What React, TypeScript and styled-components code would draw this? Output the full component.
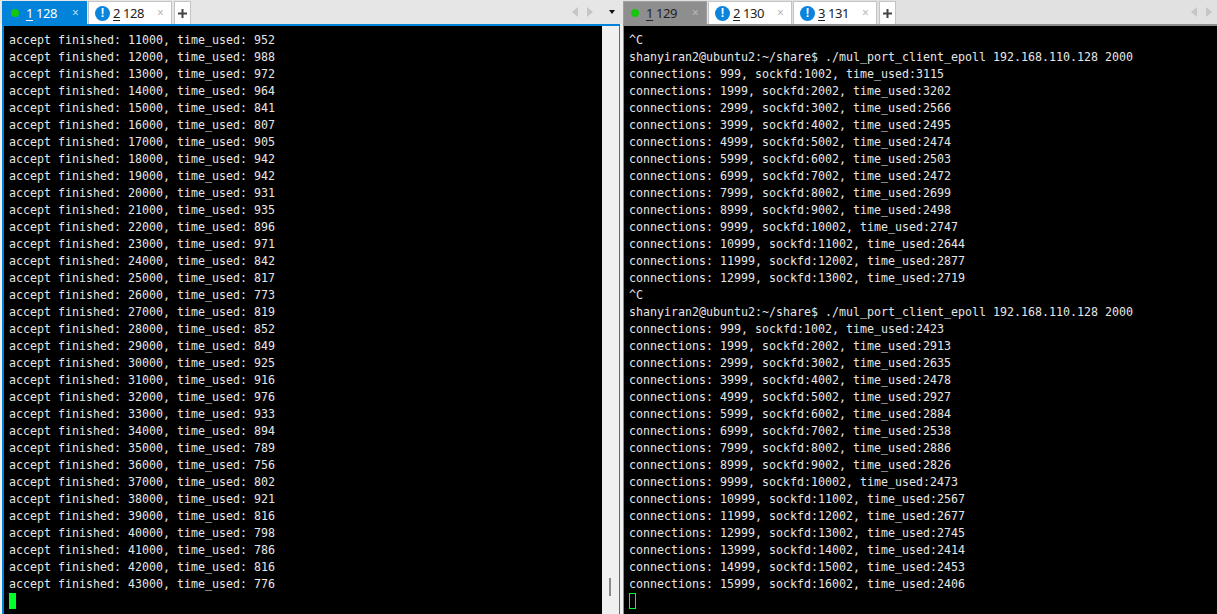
import React from "react";
import styled, { createGlobalStyle } from "styled-components";

const Global = createGlobalStyle`
  html, body { margin: 0; padding: 0; width: 1217px; height: 614px; overflow: hidden; background: #f0f0f0; }
`;

const Page = styled.div`
  display: flex;
  width: 1217px;
  height: 614px;
  background: #f0f0f0;
  font-family: "Noto Sans", "Liberation Sans", sans-serif;
`;

const Pane = styled.section<{ $w: number }>`
  width: ${(p) => p.$w}px;
  flex: none;
  display: flex;
  flex-direction: column;
  height: 614px;
`;

const TabBar = styled.div`
  height: 24px;
  flex: none;
  display: flex;
  align-items: flex-end;
  gap: 1px;
  padding-left: 2px;
  background: #e6e6e6;
`;

const RightBar = styled(TabBar)`
  background: #e1e1e1;
  padding-left: 0;
`;

const Tab = styled.div<{ $state: "active" | "dim" | "idle" }>`
  width: ${(p) => (p.$state === "active" ? 85 : 84)}px;
  height: 23px;
  box-sizing: border-box;
  display: flex;
  align-items: center;
  padding-left: ${(p) => (p.$state === "idle" ? 6 : p.$state === "active" ? 8 : 7)}px;
  font-size: 13px;
  letter-spacing: -0.4px;
  background: ${(p) => (p.$state === "active" ? "#0083d8" : p.$state === "dim" ? "#8e8e8e" : "#fff")};
  color: ${(p) => (p.$state === "active" ? "#fff" : "#222")};
  border: 1px solid ${(p) => (p.$state === "active" ? "#0083d8" : p.$state === "dim" ? "#a0a0a0" : "#c4c4c4")};
  border-bottom: none;
  flex: none;
`;

const Dot = styled.span`
  width: 8px;
  height: 8px;
  border-radius: 50%;
  background: #16c60c;
  margin-right: 7px;
  flex: none;
`;

const Alert = styled.span`
  width: 15px;
  height: 15px;
  border-radius: 50%;
  background: #0a84dd;
  color: #fff;
  font: bold 12px/15px "Liberation Sans", sans-serif;
  text-align: center;
  flex: none;
  letter-spacing: 0;
  margin-right: 3px;
`;

const Label = styled.span`
  flex: 1;
  white-space: nowrap;
  u { text-underline-offset: 2px; }
`;

const Close = styled.span<{ $on?: boolean }>`
  width: 14px;
  font-size: 12px;
  line-height: 12px;
  color: ${(p) => (p.$on ? "#b9dcf5" : "#b9b9b9")};
  flex: none;
`;

const Plus = styled.div`
  width: 17px;
  height: 23px;
  box-sizing: border-box;
  margin-left: 1px;
  border: 1px solid #c4c4c4;
  border-bottom: none;
  background: #fff;
  color: #444;
  display: flex;
  align-items: center;
  justify-content: center;
  flex: none;
`;

const Arrows = styled.div<{ $pad: number }>`
  margin-left: auto;
  display: flex;
  align-items: center;
  align-self: center;
  gap: 9px;
  padding-right: ${(p) => p.$pad}px;
`;

const Body = styled.div<{ $tone: string }>`
  flex: 1;
  display: flex;
  box-sizing: border-box;
  border-style: solid;
  border-color: ${(p) => p.$tone};
  min-height: 0;
`;

const LeftBody = styled(Body)`
  border-width: 2px 1px 0 2px;
  margin: 0 3px 0 2px;
`;

const RightBody = styled(Body)`
  border-width: 2px 0 0 1px;
`;

const Term = styled.pre`
  flex: 1;
  margin: 0;
  background: #000;
  color: #e6e6e6;
  font-family: "DejaVu Sans Mono", monospace;
  font-size: 11.63px;
  line-height: 17px;
  padding: 6px 0 0 5px;
  overflow: hidden;
`;

const Cursor = styled.span<{ $hollow?: boolean }>`
  display: inline-block;
  width: 7px;
  height: 16px;
  box-sizing: border-box;
  vertical-align: top;
  background: ${(p) => (p.$hollow ? "transparent" : "#00ff2a")};
  border: 1px solid #00ff2a;
`;

const Scrollbar = styled.div`
  width: 17px;
  flex: none;
  background: #f0f0f0;
  position: relative;
`;

const Thumb = styled.div`
  position: absolute;
  left: 7px;
  top: 552px;
  width: 2px;
  height: 18px;
  background: #8a8a8a;
`;

const ChevronIcon = styled.svg`
  margin-left: 7px;
`;

const Chevron = () => (
  <ChevronIcon width="6" height="4" viewBox="0 0 6 4"><path d="M0 0h6L3 4z" fill="#111" /></ChevronIcon>
);

const Arr = ({ right }: { right?: boolean }) => (
  <svg width="6" height="10" viewBox="0 0 6 10"><path d={right ? "M0 0l6 5-6 5z" : "M6 0L0 5l6 5z"} fill="#c6c6c6" /></svg>
);

const PlusIcon = () => (
  <svg width="9" height="9" viewBox="0 0 9 9"><path d="M3.5 0h2v3.5H9v2H5.5V9h-2V5.5H0v-2h3.5z" fill="#444" /></svg>
);

const leftTimes = [952,988,972,964,841,807,905,942,942,931,935,896,971,842,817,773,819,852,849,925,916,976,933,894,789,756,802,921,816,798,786,816,776];
const leftLines = leftTimes.map((t, i) => `accept finished: ${11000 + i * 1000}, time_used: ${t}`).join("\n");

const conn = (arr: number[]) => arr.map((t, i) => `connections: ${(i + 1) * 1000 - 1}, sockfd:${(i + 1) * 1000 + 2}, time_used:${t}`).join("\n");
const cmd = "^C\nshanyiran2@ubuntu2:~/share$ ./mul_port_client_epoll 192.168.110.128 2000\n";
const rightText = cmd + conn([3115,3202,2566,2495,2474,2503,2472,2699,2498,2747,2644,2877,2719]) + "\n" + cmd + conn([2423,2913,2635,2478,2927,2884,2538,2886,2826,2473,2567,2677,2745,2414,2453,2406]);

export default function App() {
  return (
    <Page>
      <Global />
      <Pane $w={623}>
        <TabBar>
          <Tab $state="active"><Dot /><Label><u>1</u> 128</Label><Close $on>×</Close></Tab>
          <Tab $state="idle"><Alert>!</Alert><Label><u>2</u> 128</Label><Close>×</Close></Tab>
          <Plus><PlusIcon /></Plus>
          <Arrows $pad={8}><Arr /><Arr right /><Chevron /></Arrows>
        </TabBar>
        <LeftBody $tone="#0083d8">
          <Term>{leftLines}{"\n"}<Cursor /></Term>
          <Scrollbar><Thumb /></Scrollbar>
        </LeftBody>
      </Pane>
      <Pane $w={594}>
        <RightBar>
          <Tab $state="dim"><Dot /><Label><u>1</u> 129</Label><Close>×</Close></Tab>
          <Tab $state="idle"><Alert>!</Alert><Label><u>2</u> 130</Label><Close>×</Close></Tab>
          <Tab $state="idle"><Alert>!</Alert><Label><u>3</u> 131</Label><Close>×</Close></Tab>
          <Plus><PlusIcon /></Plus>
          <Arrows $pad={5}><Arr /><Arr right /></Arrows>
        </RightBar>
        <RightBody $tone="#8e8e8e">
          <Term>{rightText}{"\n"}<Cursor $hollow /></Term>
        </RightBody>
      </Pane>
    </Page>
  );
}
